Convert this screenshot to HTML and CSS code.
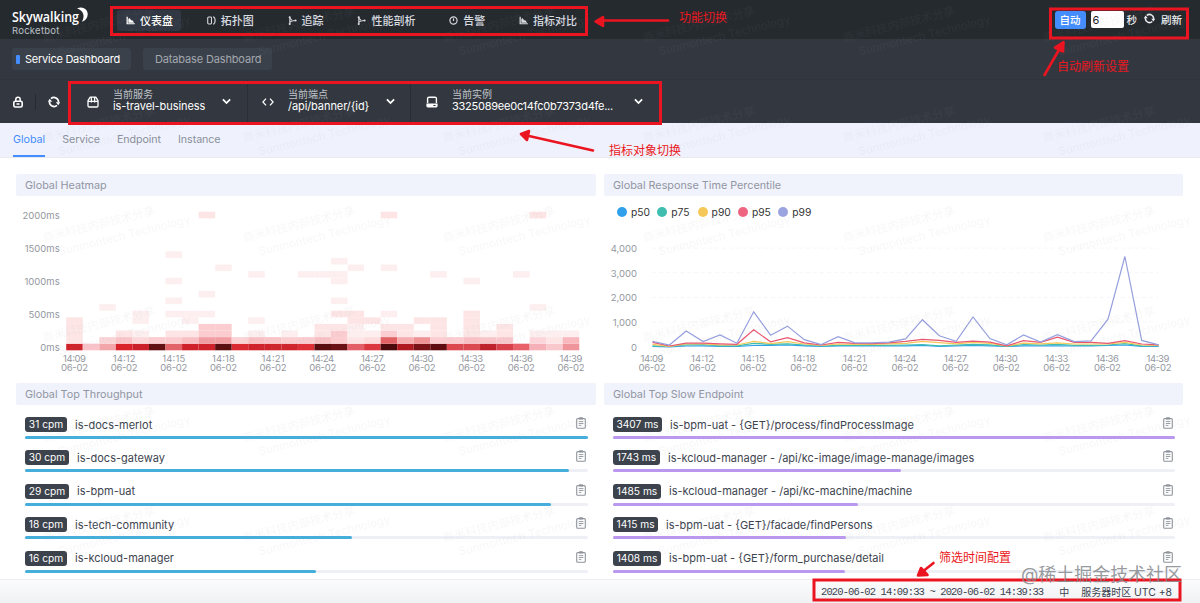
FILE: index.html
```
<!DOCTYPE html>
<html lang="zh">
<head>
    <meta charset="UTF-8">
    <meta name="viewport" content="width=device-width, initial-scale=1.0">
    <title>Skywalking Rocketbot</title>
    <link rel="stylesheet" href="styles.css">
</head>
<body>

    <!-- shared icons -->
    <svg class="defs">
        <symbol id="i-chart" viewBox="0 0 10 10"><path d="M.6 .8H2V8H9.8V9.300H.6Z" fill="currentColor"/><path d="M2.600 7.400V3L4.200 2.400L5.600 4.600L7.400 5L9 7.400Z" fill="currentColor"/></symbol>
        <symbol id="i-topo" viewBox="0 0 10 10"><rect x="0.8" y="1.2" width="4.2" height="7.6" rx="1" fill="none" stroke="currentColor" stroke-width="1.2"/><path d="M6.8 .8C9.8 1.800 9.8 8.200 6.8 9.2" fill="none" stroke="currentColor" stroke-width="1.2"/></symbol>
        <symbol id="i-trace" viewBox="0 0 10 10"><path d="M2 1V9.5M2.2 7C3 5.6 4.2 5.2 8 5M2.2 2.6L4.4 4.6" fill="none" stroke="currentColor" stroke-width="1.2"/><circle cx="1.9" cy="1.4" r="1.2" fill="currentColor"/><circle cx="1.9" cy="8.8" r="1.1" fill="currentColor"/><circle cx="8.4" cy="5" r="1.2" fill="currentColor"/></symbol>
        <symbol id="i-alarm" viewBox="0 0 10 10"><circle cx="5" cy="5" r="4" fill="none" stroke="currentColor" stroke-width="1.3"/><path d="M5 2.6V5.6" stroke="currentColor" stroke-width="1.3"/></symbol>
        <symbol id="i-lock" viewBox="0 0 12 12"><rect x="1.8" y="5.2" width="8.4" height="5.8" rx="1.6" fill="none" stroke="currentColor" stroke-width="1.6"/><path d="M3.8 5V3.4a2.2 2.2 0 0 1 4.4 0V5M4.500 8.100H7.500" fill="none" stroke="currentColor" stroke-width="1.5"/></symbol>
        <symbol id="i-sync" viewBox="0 0 12 12"><path d="M3 2.700A4.500 4.500 0 0 1 10.500 6.400M9 9.300A4.500 4.500 0 0 1 1.500 5.600" fill="none" stroke="currentColor" stroke-width="1.7"/><path d="M7.800 6.200H12.200L10.300 9.200ZM-.2 5.800H4.200L1.700 2.800Z" fill="currentColor"/></symbol>
        <symbol id="i-box" viewBox="0 0 12 12"><path d="M3.2 1.2H8.8L11 4.6V9.8a1.2 1.2 0 0 1-1.2 1.2H2.2A1.2 1.2 0 0 1 1 9.8V4.6ZM1 5.4H11M4.4 1.4V6.6M7.6 1.4V6.6" fill="none" stroke="currentColor" stroke-width="1.3" stroke-linejoin="round"/></symbol>
        <symbol id="i-code" viewBox="0 0 12 12"><path d="M4 2.6L.9 6L4 9.4M8 2.6L11.1 6L8 9.4" fill="none" stroke="currentColor" stroke-width="1.2"/></symbol>
        <symbol id="i-disk" viewBox="0 0 12 12"><path d="M1.6 7V2.6A1.4 1.4 0 0 1 3 1.2H9a1.4 1.4 0 0 1 1.4 1.4V7" fill="none" stroke="currentColor" stroke-width="1.4"/><path d="M.4 7.600H11.600V10a1.4 1.4 0 0 1-1.4 1.4H1.8A1.4 1.4 0 0 1 .4 10ZM7.4 9V10H9.6V9Z" fill="currentColor" fill-rule="evenodd"/></symbol>
        <symbol id="i-down" viewBox="0 0 8 8"><path d="M.8 2.2L4 5.4L7.2 2.2" fill="none" stroke="currentColor" stroke-width="1.6"/></symbol>
        <symbol id="i-clip" viewBox="0 0 10 12"><rect x=".7" y="1.6" width="8.6" height="9.7" rx="1" fill="none" stroke="currentColor" stroke-width="1.1"/><rect x="3" y=".2" width="4" height="2.4" rx=".6" fill="currentColor"/><path d="M2.8 4.6H7.4M2.8 6.5H7.4M2.8 8.4H5.4" stroke="currentColor" stroke-width=".9"/></symbol>
    </svg>

    <header class="nav">
        <div class="logo">
            <svg class="logo-name" width="78" height="22">
                <text x="0" y="16" textLength="67" lengthAdjust="spacingAndGlyphs">Skywalking</text>
                <path d="M65 2.500C71 -.5 77 4 75.500 10C74.800 13 72 15.500 70 15.500C73.500 10 71 4 65 2.500Z"/>
            </svg>
            <span class="logo-sub">Rocketbot</span>
        </div>
        <nav class="menu">
            <a class="menu-item active"><svg><use href="#i-chart"/></svg>仪表盘</a>
            <a class="menu-item"><svg><use href="#i-topo"/></svg>拓扑图</a>
            <a class="menu-item"><svg><use href="#i-trace"/></svg>追踪</a>
            <a class="menu-item"><svg><use href="#i-trace"/></svg>性能剖析</a>
            <a class="menu-item"><svg><use href="#i-alarm"/></svg>告警</a>
            <a class="menu-item"><svg><use href="#i-chart"/></svg>指标对比</a>
        </nav>
        <div class="reload">
            <button type="button" class="auto">自动</button>
            <input type="text" class="seconds" value="6">
            <span class="unit">秒</span>
            <svg class="reload-icon"><use href="#i-sync"/></svg>
            <span>刷新</span>
        </div>
    </header>

    <div class="boards">
        <a class="board active">Service Dashboard</a>
        <a class="board">Database Dashboard</a>
    </div>

    <div class="selectors">
        <div class="tool lock"><svg><use href="#i-lock"/></svg></div>
        <div class="tool"><svg><use href="#i-sync"/></svg></div>
        <div class="selector service">
            <svg class="sel-icon"><use href="#i-box"/></svg>
            <div class="sel-text"><small>当前服务</small><span>is-travel-business</span></div>
            <svg class="arrow"><use href="#i-down"/></svg>
        </div>
        <div class="selector endpoint">
            <svg class="sel-icon"><use href="#i-code"/></svg>
            <div class="sel-text"><small>当前端点</small><span>/api/banner/{id}</span></div>
            <svg class="arrow"><use href="#i-down"/></svg>
        </div>
        <div class="selector instance">
            <svg class="sel-icon"><use href="#i-disk"/></svg>
            <div class="sel-text"><small>当前实例</small><span>3325089ee0c14fc0b7373d4fe...</span></div>
            <svg class="arrow"><use href="#i-down"/></svg>
        </div>
    </div>

    <div class="tabs">
        <a class="tab active">Global</a>
        <a class="tab">Service</a>
        <a class="tab">Endpoint</a>
        <a class="tab">Instance</a>
    </div>

    <main class="panels">
        <section class="panel">
            <h2>Global Heatmap</h2>
            <svg id="heatmap" class="chart" width="580" height="186"></svg>
        </section>
        <section class="panel">
            <h2>Global Response Time Percentile</h2>
            <div class="legend">
                <span class="key p50">p50</span>
                <span class="key p75">p75</span>
                <span class="key p90">p90</span>
                <span class="key p95">p95</span>
                <span class="key p99">p99</span>
            </div>
            <svg id="lines" class="chart" width="579" height="156"></svg>
        </section>
        <section class="panel">
            <h2>Global Top Throughput</h2>
            <div id="throughput" class="list blue"></div>
        </section>
        <section class="panel">
            <h2>Global Top Slow Endpoint</h2>
            <div id="slow" class="list purple"></div>
        </section>
    </main>

    <footer class="footer">
        <span class="time">2020-06-02 14:09:33 ~ 2020-06-02 14:39:33</span>
        <span class="lang">中</span>
        <span class="zone">服务器时区 <i>UTC +8</i></span>
    </footer>

    <!-- repeated watermark -->
    <svg class="overlay" width="1200" height="603">
        <pattern id="mark" x="40" y="-8" width="200" height="100" patternUnits="userSpaceOnUse">
            <g class="mark" transform="translate(4 50) rotate(-14)">
                <text x="0" y="0">商米科技内部技术分享</text>
                <text x="12" y="17">Sunmontech Technology</text>
            </g>
        </pattern>
        <rect width="1200" height="603" fill="url(#mark)"/>
    </svg>

    <!-- notes drawn over the page -->
    <svg class="overlay notes" width="1200" height="603">
        <g class="frame">
            <rect x="111.500" y="7.500" width="475" height="27"/>
            <rect x="1050.500" y="9" width="137" height="29"/>
            <rect x="69.500" y="82.500" width="591" height="41"/>
            <rect x="814" y="580" width="366" height="20"/>
        </g>
        <g class="pointer">
            <path d="M668 20.500H602"/>
            <path d="M595.500 21.500L603 17V26Z"/>
            <path d="M1044.500 75L1060 48"/>
            <path d="M1063.500 42L1055 47.500L1063 51.500Z"/>
            <path d="M593 150.500L529 136"/>
            <path d="M521 134L529 131L527 140Z"/>
            <path d="M933.500 563L924 570.500"/>
            <path d="M918 575.500L921 568L927.500 575Z"/>
        </g>
        <text x="679" y="22">功能切换</text>
        <text x="1057" y="71">自动刷新设置</text>
        <text x="609" y="155">指标对象切换</text>
        <text x="939" y="562">筛选时间配置</text>
        <text class="credit" x="1021" y="581" textLength="161">@稀土掘金技术社区</text>
    </svg>

    <script src="charts.js"></script>
</body>
</html>
```
FILE: styles.css
```
* {
    box-sizing: border-box;
}

body {
    margin: 0;
    width: 1200px;
    height: 603px;
    overflow: hidden;
    position: relative;
    display: flex;
    flex-direction: column;
    background-color: #fff;
    color: #3d444f;
    font-family: Inter, "Noto Sans CJK SC", sans-serif;
    font-size: 11px;
}

.defs {
    position: absolute;
    width: 0;
    height: 0;
}

/* top navigation */
.nav {
    flex: none;
    display: flex;
    height: 39px;
    padding: 0 18px 0 12px;
    background-color: #252a2f;
    color: #eceef1;
}

.logo {
    width: 105px;
    padding-top: 6px;
}

.logo-name {
    display: block;
    overflow: visible;
    height: 19px;
    fill: #fff;
    font-family: "Open Sans", sans-serif;
    font-weight: 600;
    font-size: 15px;
}

.logo-sub {
    display: block;
    color: #bcc1c7;
    font-size: 9.5px;
    line-height: 12px;
    letter-spacing: 0.25px;
}

.menu {
    display: flex;
    gap: 16.8px;
    align-items: center;
    height: 40px;
}

.menu-item {
    display: flex;
    align-items: center;
    height: 21px;
    padding: 0 8px 0 9px;
    border-radius: 3px;
    color: #d8dbe0;
    font-weight: 500;
    white-space: nowrap;
}

.menu-item.active {
    background-color: #313843;
    color: #fff;
}

.menu-item svg {
    width: 9px;
    height: 9px;
    margin-right: 5px;
}

.reload {
    display: flex;
    align-items: center;
    height: 39px;
    margin-left: auto;
    font-size: 10.5px;
    font-weight: 500;
}

.auto {
    width: 31px;
    height: 18px;
    padding: 0;
    border: none;
    border-radius: 3px;
    background-color: #448dfe;
    color: #fff;
    font: inherit;
}

.seconds {
    width: 33px;
    height: 17px;
    margin: 0 3px 0 5px;
    padding: 0 2px;
    border: none;
    border-radius: 2px;
    background-color: #fff;
    color: #222;
    font: 11px Inter, sans-serif;
}

.reload-icon {
    width: 11px;
    height: 11px;
    margin: 0 6px 2px 7px;
}

/* dashboards */
.boards {
    flex: none;
    display: flex;
    gap: 12px;
    height: 41px;
    padding: 9px 12px;
    background-color: #333840;
    border-bottom: 1px solid #2f343b;
}

.board {
    width: 129px;
    height: 22px;
    padding-left: 12px;
    border-radius: 3px;
    background-color: #3b414a;
    color: #a3a8b0;
    line-height: 22px;
    white-space: nowrap;
    letter-spacing: -0.15px;
}

.board.active {
    display: flex;
    align-items: center;
    width: 119px;
    padding-left: 4px;
    color: #fff;
    letter-spacing: -0.25px;
}

.board.active::before {
    content: "";
    width: 4px;
    height: 9px;
    margin-right: 5px;
    border-radius: 1px;
    background-color: #448dfe;
}

/* service, endpoint and instance pickers */
.selectors {
    flex: none;
    display: flex;
    height: 43px;
    background-color: #333840;
    color: #fff;
}

.tool {
    display: flex;
    align-items: center;
    justify-content: center;
    width: 35px;
}

.tool svg,
.sel-icon {
    width: 12px;
    height: 12px;
}

.tool.lock {
    width: 36px;
    background: linear-gradient(#262b31, #262b31) right center / 1px 16px no-repeat;
}

.selector {
    display: flex;
    align-items: center;
    border-right: 1px solid #2a2f36;
}

.sel-icon {
    margin-right: 14px;
}

.sel-text {
    flex: 1;
    padding-bottom: 2px;
    line-height: 13px;
    white-space: nowrap;
}

.sel-text small {
    display: block;
    color: #c0c4ca;
    font-size: 10px;
    line-height: 12px;
}

.sel-text span {
    display: block;
    letter-spacing: -0.08px;
}

.arrow {
    width: 9px;
    height: 9px;
}

.service {
    width: 177px;
    padding: 0 16px;
}

.endpoint {
    width: 163px;
    padding: 0 15px 0 14px;
}

.instance {
    width: 250px;
    padding: 0 18px 0 15px;
    border: none;
}

.instance span {
    letter-spacing: -0.24px;
}

/* tabs */
.tabs {
    flex: none;
    display: flex;
    gap: 17px;
    height: 35px;
    padding-left: 13px;
    background-color: #eff2fc;
    border-bottom: 1px solid #e8eaf2;
    font-size: 10.7px;
}

.tab {
    height: 34px;
    color: #8a8f9b;
    line-height: 34px;
    white-space: nowrap;
}

.tab + .tab {
    letter-spacing: -0.07px;
}

.tab.active {
    color: #448dfe;
    border-bottom: 2px solid #448dfe;
}

/* panels */
.panels {
    flex: none;
    display: grid;
    grid-template-columns: 580px 579px;
    grid-template-rows: 200px 200px;
    gap: 9px 8px;
    height: 421px;
    padding: 16px 16px 0;
}

.panel h2 {
    height: 22px;
    margin: 0;
    padding-left: 9px;
    background-color: #f0f2fc;
    border-radius: 2px;
    color: #9096a2;
    font-size: 10.8px;
    font-weight: 400;
    line-height: 23px;
}

.chart {
    display: block;
    overflow: visible;
}

.axis {
    fill: #94989f;
    font-size: 9.5px;
}

.legend {
    display: flex;
    height: 30px;
    padding: 2px 0 0 13px;
}

.key {
    display: flex;
    align-items: center;
    width: 40.3px;
    color: #333;
    font-size: 10.3px;
}

.key::before {
    content: "";
    width: 10px;
    height: 10px;
    margin-right: 4px;
    border-radius: 50%;
}

.p50::before { background-color: #30a0eb; }
.p75::before { background-color: #3fbeb0; }
.p90::before { background-color: #f5c85a; }
.p95::before { background-color: #f0647f; }
.p99::before { background-color: #9ba4e0; }

.list {
    padding: 12px 8px 0 9px;
}

.row {
    height: 33.4px;
}

.row-head {
    display: flex;
    align-items: center;
    height: 15px;
    white-space: nowrap;
}

.badge {
    flex: none;
    height: 15px;
    margin-right: 8px;
    border-radius: 3px;
    background-color: #3d434c;
    color: #fff;
    line-height: 15px;
    text-align: center;
    font-size: 10.2px;
}

.row-head svg {
    width: 10px;
    height: 12px;
    margin: 0 2px 3px auto;
    color: #8f949c;
}

.track {
    height: 3px;
    margin-top: 4px;
    border-radius: 2px;
    background-color: #eef0f6;
}

.bar {
    height: 3px;
    border-radius: 2px;
}

.blue .bar { background-color: #46aedb; }
.purple .bar { background-color: #bb98ef; }

/* footer */
.footer {
    position: absolute;
    left: 0;
    right: 0;
    bottom: 0;
    display: flex;
    align-items: center;
    justify-content: flex-end;
    height: 24px;
    padding-right: 28px;
    background: linear-gradient(#fcfcfd, #f0f1f3);
    border-top: 1px solid #eceef1;
    color: #3b4350;
    white-space: nowrap;
}

.time {
    font-family: "Liberation Mono", monospace;
    font-size: 10.5px;
    letter-spacing: -0.88px;
}

.lang {
    margin: 0 12px 0 16px;
    font-size: 10px;
}

.zone {
    font-size: 10px;
}

.zone i {
    font-style: normal;
    font-size: 10.4px;
}

/* overlays */
.overlay {
    position: absolute;
    top: 0;
    left: 0;
    pointer-events: none;
}

.mark {
    fill: #8a919a;
    fill-opacity: 0.07;
    font-size: 11.5px;
}

.notes text {
    fill: #ea1720;
    font-size: 12px;
}

.frame {
    fill: none;
    stroke: #ea1520;
    stroke-width: 3;
}

.pointer {
    fill: #ea1520;
    stroke: #ea1520;
    stroke-width: 2.6;
    stroke-linecap: round;
    stroke-linejoin: round;
}

.notes .credit {
    fill: #85888d;
    fill-opacity: 0.85;
    font-size: 18px;
}
```
FILE: charts.js
```
var times = ["14:09", "14:12", "14:15", "14:18", "14:21", "14:24", "14:27", "14:30", "14:33", "14:36", "14:39"];

function label(x, y, text, anchor, length) {
    var fit = length ? ' textLength="' + length + '"' : '';
    return '<text class="axis" x="' + x + '" y="' + y + '" text-anchor="' + anchor + '"' + fit + '>' + text + '</text>';
}

// each column lists [row, color], one row is 100ms
var faint = "#fdeff0", light = "#fde5e6", rose = "#fbcdd0";
var heat = [
    [[0, "#d0222a"], [1, light], [2, light], [3, light], [4, light]],
    [[0, "#f9c3c9"]],
    [[0, "#f2a6aa"], [1, "#fbd5d7"], [6, faint]],
    [[0, "#d92229"], [1, "#f8c4c7"], [2, light]],
    [[0, "#cb2029"], [1, "#fbd9da"], [2, faint], [4, faint], [5, faint]],
    [[0, "#621012"], [1, rose]],
    [[0, "#e2646a"], [1, rose], [2, light], [5, faint], [7, faint], [10, faint], [14, faint]],
    [[0, "#d0222a"], [1, "#f9c0c3"], [2, light], [4, faint], [5, faint]],
    [[0, "#d0222a"], [1, "#f09ea2"], [2, rose], [3, rose], [5, faint], [8, faint], [20, light]],
    [[0, "#5c0f11"], [1, "#f09ea2"], [2, rose], [3, rose], [12, faint]],
    [[0, "#da2b33"], [1, "#fbd5d6"]],
    [[0, "#d0222a"], [1, "#f8c0c3"], [2, faint], [4, faint], [11, faint]],
    [[0, "#d0222a"], [1, "#f9c4c7"]],
    [[0, "#d0222a"], [1, rose], [2, faint]],
    [[0, "#de2e36"], [1, rose], [11, faint]],
    [[0, "#5a0c0f"], [1, "#f8bfc3"], [2, light], [3, light], [11, faint]],
    [[0, "#6a1015"], [1, rose], [2, rose], [3, light], [5, light], [7, faint], [10, faint], [11, faint], [13, faint]],
    [[0, "#e46068"], [1, light], [2, faint], [3, faint], [4, light], [5, light], [12, faint]],
    [[0, "#dc3840"], [1, "#fcdcdc"], [2, faint], [4, light]],
    [[0, "#4a0a0c"], [1, "#e26366"], [2, rose], [3, light], [5, faint], [12, faint], [20, light]],
    [[0, "#b01820"], [1, "#f6adb0"], [2, light], [3, light]],
    [[0, "#7a1018"], [1, "#ef9296"], [2, faint], [4, light]],
    [[0, "#5f0c10"], [1, rose], [2, light], [3, light], [4, light], [11, faint]],
    [[0, "#dc484e"], [1, rose]],
    [[0, "#dc484e"], [1, "#f8c0c4"], [2, light], [3, light], [4, light], [5, light], [10, faint]],
    [[0, "#c0202a"], [1, "#f8c4c8"], [2, faint]],
    [[0, "#d8404a"], [1, "#f9c8cc"], [2, light], [3, light]],
    [[0, "#e86068"], [11, faint]],
    [[0, "#f6b0b8"], [1, "#fbd5da"], [2, faint], [6, faint], [20, light]],
    [[0, "#f9c8cc"], [1, light], [2, faint]],
    [[0, "#f0949c"], [1, "#f8b8be"], [2, faint]]
];

// origin of the drawing is the lower left corner of the panel title
function drawHeatmap() {
    var out = "";
    var step = 16.55, rowHeight = 6.6;
    heat.forEach(function (column, i) {
        column.forEach(function (cell) {
            var y = 147.7 - cell[0] * rowHeight;
            out += '<rect x="' + (50.2 + i * step) + '" y="' + y + '" width="' + step + '" height="' + rowHeight + '" fill="' + cell[1] + '"/>';
        });
    });
    for (var v = 0; v <= 2000; v += 500) {
        out += label(43.7, 154.5 - v * 0.066, v + "ms", "end");
    }
    times.forEach(function (t, i) {
        out += label(58.5 + i * step * 3, 165.5, t, "middle", 23);
        out += label(58.5 + i * step * 3, 174.5, "06-02", "middle", 27);
    });
    document.getElementById("heatmap").innerHTML = out;
}

var series = [
    ["#30a0eb", [20, 10, 40, 50, 30, 30, 60, 70, 80, 50, 30, 40, 40, 50, 40, 50, 70, 20, 50, 60, 50, 20, 50, 50, 50, 40, 40, 60, 80, 30, 20]],
    ["#3fbeb0", [50, 20, 90, 100, 50, 50, 150, 110, 130, 80, 40, 70, 70, 70, 70, 80, 100, 50, 80, 110, 90, 30, 100, 80, 110, 70, 70, 80, 140, 50, 40]],
    ["#f5c85a", [110, 30, 120, 120, 90, 80, 230, 140, 220, 120, 60, 120, 110, 110, 130, 150, 230, 180, 130, 190, 150, 40, 160, 130, 170, 120, 120, 120, 190, 80, 60]],
    ["#ea5670", [190, 40, 160, 160, 130, 110, 700, 210, 380, 170, 80, 190, 150, 140, 170, 230, 310, 270, 190, 240, 200, 50, 260, 190, 400, 190, 190, 150, 260, 120, 90]],
    ["#969fdd", [230, 80, 650, 220, 490, 150, 1430, 480, 850, 300, 100, 420, 170, 170, 200, 330, 1110, 460, 230, 1220, 340, 90, 490, 200, 500, 220, 250, 1130, 3680, 270, 90]]
];

function drawLines() {
    var out = "";
    for (var v = 0; v <= 4; v++) {
        var y = 120.5 - v * 24.6;
        if (v > 0) {
            out += '<path d="M48 ' + y + 'H554" stroke="#f6f7f8" stroke-dasharray="4 3"/>';
        }
        out += label(33, y + 4, v ? v + ",000" : "0", "end");
    }
    series.forEach(function (s) {
        var points = s[1].map(function (value, i) {
            return (48.5 + i * 16.87).toFixed(1) + "," + (121 - value * 0.0246).toFixed(1);
        });
        out += '<polyline points="' + points.join(" ") + '" fill="none" stroke="' + s[0] + '" stroke-width="1.2"/>';
    });
    times.forEach(function (t, i) {
        out += label(48 + i * 50.6, 135.5, t, "middle", 23);
        out += label(48 + i * 50.6, 144.5, "06-02", "middle", 27);
    });
    document.getElementById("lines").innerHTML = out;
}

// [value, name, badge width, bar percent]
var throughput = [
    ["31 cpm", "is-docs-merlot", 42, 100],
    ["30 cpm", "is-docs-gateway", 44, 96.7],
    ["29 cpm", "is-bpm-uat", 44, 93.5],
    ["18 cpm", "is-tech-community", 42, 58.1],
    ["16 cpm", "is-kcloud-manager", 42, 51.6]
];

var slow = [
    ["3407 ms", "is-bpm-uat - {GET}/process/findProcessImage", 49, 100],
    ["1743 ms", "is-kcloud-manager - /api/kc-image/image-manage/images", 47, 51.2],
    ["1485 ms", "is-kcloud-manager - /api/kc-machine/machine", 48, 43.6],
    ["1415 ms", "is-bpm-uat - {GET}/facade/findPersons", 45, 41.5],
    ["1408 ms", "is-bpm-uat - {GET}/form_purchase/detail", 48, 41.3]
];

function drawList(id, rows) {
    document.getElementById(id).innerHTML = rows.map(function (r) {
        return '<div class="row"><div class="row-head">' +
            '<span class="badge" style="width:' + r[2] + 'px">' + r[0] + '</span>' +
            '<span class="name">' + r[1] + '</span><svg><use href="#i-clip"/></svg></div>' +
            '<div class="track"><div class="bar" style="width:' + r[3] + '%"></div></div></div>';
    }).join("");
}

drawHeatmap();
drawLines();
drawList("throughput", throughput);
drawList("slow", slow);
```
